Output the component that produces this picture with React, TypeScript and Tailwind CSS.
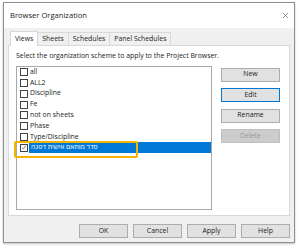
import { X } from "lucide-react";

const SCHEMES = ["all", "ALL2", "Discipline", "Fe", "not on sheets", "Phase", "Type/Discipline"];

const TABS = ["Views", "Sheets", "Schedules", "Panel Schedules"];

function Box({ checked = false }: { checked?: boolean }) {
  return (
    <span className="w-[8px] h-[8px] border border-[#444] bg-white shrink-0 flex items-center justify-center">
      {checked && (
        <svg viewBox="0 0 8 8" className="w-[7px] h-[7px]">
          <path d="M1 4.2 L3 6 L7 1.5" fill="none" stroke="#666" strokeWidth="1.1" />
        </svg>
      )}
    </span>
  );
}

function Btn({ label, focus = false, disabled = false }: { label: string; focus?: boolean; disabled?: boolean }) {
  return (
    <div
      className={
        "w-[59px] h-[14px] flex items-center justify-center border " +
        (disabled
          ? "bg-[#cccccc] border-[#bfbfbf] text-[#9a9a9a]"
          : focus
          ? "bg-[#e1e1e1] border-[#0078d7] text-[#222]"
          : "bg-[#e1e1e1] border-[#adadad] text-[#222]")
      }
    >
      {label}
    </div>
  );
}

function FootBtn({ label }: { label: string }) {
  return (
    <div className="w-[49px] h-[14px] flex items-center justify-center border border-[#adadad] bg-[#e1e1e1] text-[#222]">
      {label}
    </div>
  );
}

export default function App() {
  return (
    <div
      className="w-[300px] h-[247px] bg-white pl-[3px] pt-[2px] text-[6.9px] leading-none"
      style={{ fontFamily: '"Open Sans", "DejaVu Sans", sans-serif' }}
    >
      <div className="w-[292px] h-[241px] border border-[#8f8f8f] flex flex-col shadow-[0_1px_2px_rgba(0,0,0,0.25)]">
        {/* Title bar */}
        <div className="h-[25px] bg-white flex items-center justify-between pl-[6px] pr-[4px]">
          <span className="text-[7.6px] text-[#222]">Browser Organization</span>
          <X className="w-[9px] h-[9px] text-[#444]" strokeWidth={1.5} />
        </div>

        {/* Body */}
        <div className="flex-1 bg-[#f0f0f0] px-[4px] flex flex-col">
          <div className="flex items-end h-[16px] pl-[2px] mt-[1px] relative z-10">
            {TABS.map((t, i) => (
              <div
                key={t}
                className={
                  i === 0
                    ? "h-[15px] px-[4px] bg-white border border-b-0 border-[#d9d9d9] flex items-center text-[#222] -mb-[1px]"
                    : "h-[13px] px-[4px] border border-b-0 border-l-0 border-[#d9d9d9] flex items-center text-[#222]"
                }
              >
                {t}
              </div>
            ))}
          </div>

          {/* Tab panel */}
          <div className="h-[171px] bg-white border border-[#d9d9d9] pl-[7px] pt-[7px]">
            <div className="text-[#222]">Select the organization scheme to apply to the Project Browser.</div>
            <div className="flex mt-[6px]">
              {/* List box */}
              <div className="w-[196px] h-[144px] border border-[#a8a8a8] relative">
                {SCHEMES.map((s) => (
                  <div key={s} className="h-[10.8px] flex items-center pl-[3px] gap-[1px] text-[#222]">
                    <Box />
                    <span className="pl-[1px]">{s}</span>
                  </div>
                ))}
                <div className="h-[10.8px] flex items-center pl-[3px] gap-[1px]">
                  <Box checked />
                  <span className="flex-1 h-full bg-[#0078d7] text-white flex items-center pl-[2px]">
                    סדר מותאם אישית דפנה
                  </span>
                </div>
                <div className="absolute left-[-3px] top-[74px] w-[124px] h-[17px] border-2 border-[#f5b400] rounded-[2px]" />
              </div>

              {/* Buttons */}
              <div className="ml-[9px] mt-[2px] flex flex-col gap-[6.5px]">
                <Btn label="New" />
                <Btn label="Edit" focus />
                <Btn label="Rename" />
                <Btn label="Delete" disabled />
              </div>
            </div>
          </div>

          {/* Footer */}
          <div className="flex justify-end gap-[5px] mt-[8px]">
            <FootBtn label="OK" />
            <FootBtn label="Cancel" />
            <FootBtn label="Apply" />
            <FootBtn label="Help" />
          </div>
        </div>
      </div>
    </div>
  );
}
